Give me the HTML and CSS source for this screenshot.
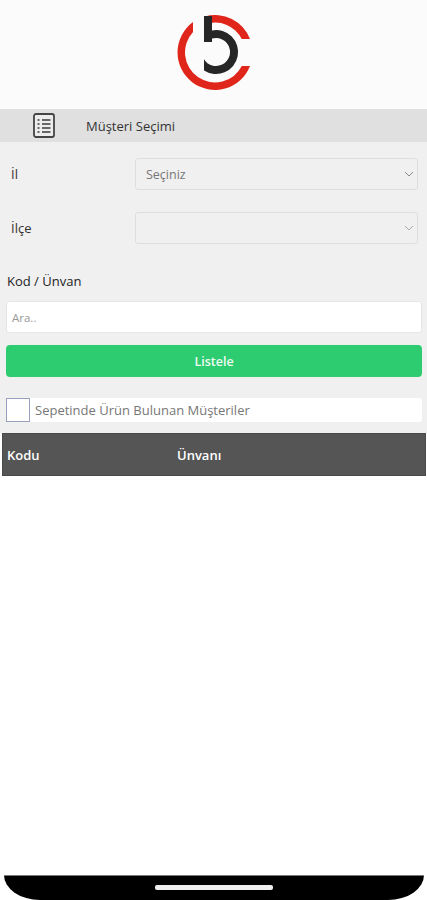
FILE: index.html
```html
<!DOCTYPE html>
<html lang="en">

<head>
  <meta charset="UTF-8">
  <meta name="viewport" content="width=device-width, initial-scale=1.0">
  <title>Müşteri Seçimi</title>
  <link rel="stylesheet" href="styles.css">
</head>

<body>
  <div class="screen">
    <header class="logo-area">
      <svg class="logo" width="76" height="77" viewBox="0 0 76 77">
        <path d="M16 8.100A37.500 37.500 0 1 0 73 52H64.800A30 30 0 1 1 16 18.100Z" fill="#e0251b" />
        <path d="M28 2.400A37.500 37.500 0 0 1 73 25H64.800A30 30 0 0 0 28 10.200Z" fill="#e0251b" />
        <path d="M27 2H35V16.400A22 22 0 1 1 27 56.400V45.200A14 14 0 1 0 35 24.600V28H27Z" fill="#262626" />
      </svg>
    </header>

    <div class="title-bar">
      <svg class="title-icon" width="22" height="25" viewBox="0 0 22 25">
        <rect x="1" y="1" width="20" height="23" rx="2" fill="#ececec" stroke="#444" stroke-width="1.800" />
        <path d="M4.500 7H6.500M4.500 11H6.500M4.500 15H6.500M4.500 19H6.500M9 7H17.500M9 11H17.500M9 15H17.500M9 19H17.500" stroke="#666" stroke-width="1.800" />
      </svg>
      <span>Müşteri Seçimi</span>
    </div>

    <main class="filters">
      <div class="field-row">
        <label class="field-label">İl</label>
        <div class="select">
          <span>Seçiniz</span>
          <svg class="chevron" width="10" height="6" viewBox="0 0 10 6"><path d="M1 1l4 4 4-4" fill="none" stroke="#888" /></svg>
        </div>
      </div>
      <div class="field-row">
        <label class="field-label">İlçe</label>
        <div class="select">
          <span></span>
          <svg class="chevron" width="10" height="6" viewBox="0 0 10 6"><path d="M1 1l4 4 4-4" fill="none" stroke="#aaa" /></svg>
        </div>
      </div>

      <label class="search-label">Kod / Ünvan</label>
      <div class="search-input">Ara..</div>
      <button class="list-button">Listele</button>

      <div class="check-row">
        <span class="checkbox"></span>
        <span>Sepetinde Ürün Bulunan Müşteriler</span>
      </div>
    </main>

    <div class="table-head">
      <span class="col-code">Kodu</span>
      <span>Ünvanı</span>
    </div>

    <div class="table-body"></div>

    <footer class="phone-bottom">
      <span class="home-bar"></span>
    </footer>
  </div>
</body>

</html>
```

FILE: styles.css
```css
html,
body {
  margin: 0;
  height: 100%;
}

body {
  font-family: 'Open Sans', 'Noto Sans', sans-serif;
  background-color: white;
  color: #222;
}

.screen {
  display: flex;
  flex-direction: column;
  height: 900px;
  overflow: hidden;
}

.logo-area {
  height: 109px;
  display: flex;
  justify-content: center;
  align-items: flex-start;
  padding: 14px 0 0 3px;
  box-sizing: border-box;
  background-color: #fbfbfb;
}

.title-bar {
  height: 33px;
  display: flex;
  align-items: center;
  padding-left: 33px;
  background-color: #e0e0e0;
  font-size: 13px;
  color: #333;
}

.title-icon {
  margin-right: 31px;
}

.filters {
  height: 291px;
  box-sizing: border-box;
  padding: 16px 5px 0 6px;
  background-color: #f0f0f0;
  display: flex;
  flex-direction: column;
}

.field-row {
  display: flex;
  align-items: center;
  height: 32px;
  margin-bottom: 22px;
}

.field-label {
  width: 129px;
  padding-left: 5px;
  font-size: 13px;
  box-sizing: border-box;
  color: #333;
}

.select {
  flex: 1;
  height: 32px;
  box-sizing: border-box;
  margin-right: 4px;
  padding: 0 3px 0 10px;
  display: flex;
  align-items: center;
  justify-content: space-between;
  border: 1px solid #dedede;
  border-radius: 3px;
  font-size: 12.500px;
  color: #777;
}

.search-label {
  font-size: 13px;
  line-height: 17px;
  margin-top: 7px;
  padding-left: 1px;
  color: #222;
}

.search-input {
  margin-top: 11px;
  height: 32px;
  box-sizing: border-box;
  padding-left: 5px;
  display: flex;
  align-items: center;
  background-color: white;
  border: 1px solid #e6e6e6;
  border-radius: 3px;
  font-size: 11.500px;
  color: #999;
}

.list-button {
  margin-top: 12px;
  height: 32px;
  border: 0;
  border-radius: 4px;
  background-color: #2ecc71;
  color: #eefbf3;
  font-family: inherit;
  font-size: 12.500px;
  font-weight: 600;
}

.check-row {
  margin-top: 21px;
  height: 24px;
  display: flex;
  align-items: center;
  gap: 5px;
  background-color: white;
  border-radius: 3px;
  font-size: 13px;
  color: #777;
}

.checkbox {
  width: 24px;
  height: 24px;
  box-sizing: border-box;
  border: 1px solid #9a9fbd;
  background-color: white;
}

.table-head {
  margin: 0 1px 0 2px;
  height: 43px;
  box-sizing: border-box;
  display: flex;
  align-items: center;
  padding-left: 4px;
  background-color: #555;
  border: 1px solid #4a4a4a;
  color: white;
  font-size: 13px;
  font-weight: 600;
}

.col-code {
  width: 170px;
}

.table-body {
  flex: 1;
  background-color: white;
}

.phone-bottom {
  height: 25px;
  margin: 0 3px 0 4px;
  display: flex;
  justify-content: center;
  padding-top: 9px;
  box-sizing: border-box;
  background-color: black;
  border-top: 1px solid #777;
  border-radius: 0 0 36px 36px / 0 0 25px 25px;
}

.home-bar {
  width: 118px;
  height: 5px;
  border-radius: 2px;
  background-color: #eee;
}
```
